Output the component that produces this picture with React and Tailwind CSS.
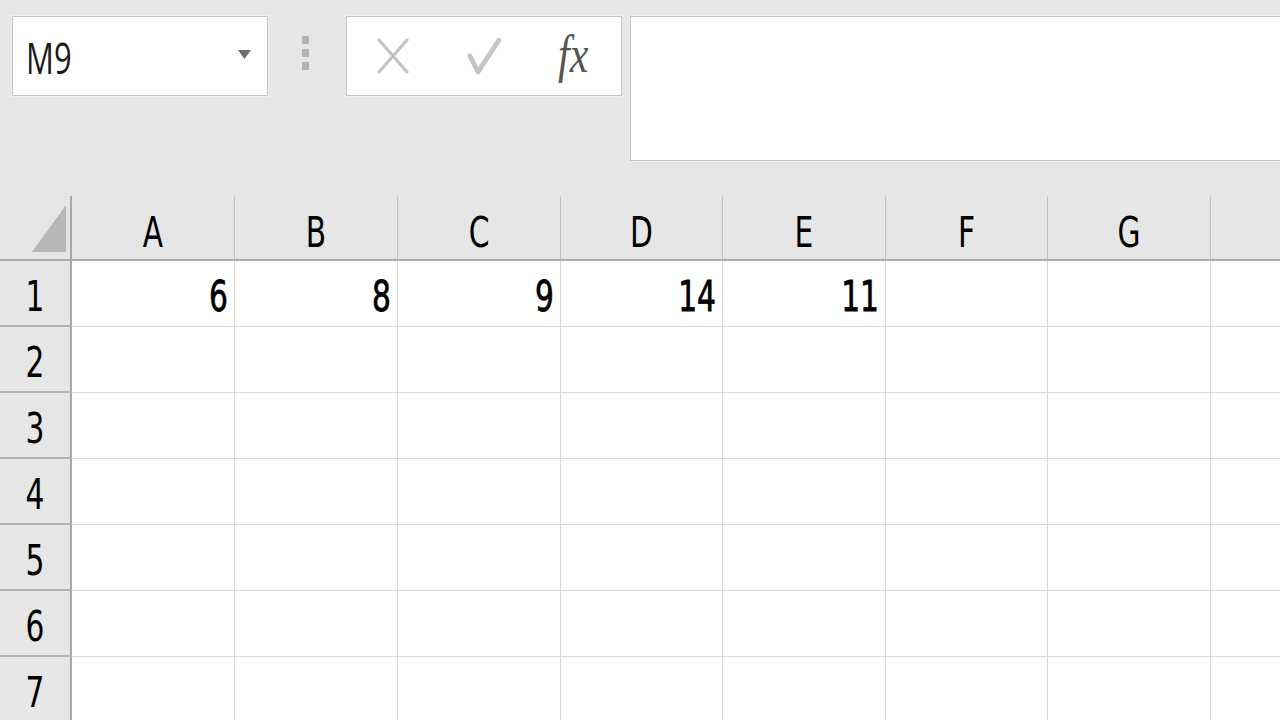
import React from "react";

const cols = [
  { l: "A", w: "w-[163px]" },
  { l: "B", w: "w-[163px]" },
  { l: "C", w: "w-[163px]" },
  { l: "D", w: "w-[162px]" },
  { l: "E", w: "w-[163px]" },
  { l: "F", w: "w-[162px]" },
  { l: "G", w: "w-[163px]" },
];

const row1 = ["6", "8", "9", "14", "11", "", ""];

const cellFont = { fontFamily: '"DejaVu Sans Condensed", "DejaVu Sans", sans-serif' };

function Glyph({ children, className = "" }) {
  return (
    <span className={"inline-block origin-center scale-y-[1.3] text-[33px] leading-none " + className} style={cellFont}>
      {children}
    </span>
  );
}

export default function App() {
  return (
    <div className="w-[1280px] h-[720px] bg-[#e6e6e6] overflow-hidden flex flex-col">
      {/* toolbar */}
      <div className="h-[196px] shrink-0 flex items-start pt-4 pl-3">
        <div className="relative w-[256px] h-[80px] bg-white border border-[#c3c3c3] shadow-[0_0_0_1px_#f0f0f0] flex items-center pl-[13px] pt-[2px]">
          <span
            className="inline-block origin-center scale-y-[1.42] text-[31px] text-[#1a1a1a] leading-none"
            style={{ fontFamily: '"Open Sans", "Liberation Sans", sans-serif' }}
          >
            M9
          </span>
          <svg className="absolute right-[16px] top-[33px]" width="13" height="9" viewBox="0 0 13 9">
            <polygon points="0,0 13,0 6.5,9" fill="#6e6e6e" />
          </svg>
        </div>
        <div className="ml-[34px] mt-[20px] flex flex-col gap-[5px]">
          <div className="w-[7px] h-[8px] bg-[#b3b3b3]" />
          <div className="w-[7px] h-[8px] bg-[#b3b3b3]" />
          <div className="w-[7px] h-[8px] bg-[#b3b3b3]" />
        </div>
        <div className="relative ml-[37px] w-[276px] h-[80px] bg-white border border-[#c3c3c3] shadow-[0_0_0_1px_#f0f0f0]">
          <svg className="absolute left-[30px] top-[21px]" width="32" height="36" viewBox="0 0 32 36">
            <path d="M2 2 L30 34 M2 34 L30 2" stroke="#c4c4c4" strokeWidth="3.2" strokeLinecap="round" fill="none" />
          </svg>
          <svg className="absolute left-[120px] top-[21px]" width="34" height="38" viewBox="0 0 34 38">
            <path d="M3 18 L11 34 L32 2" stroke="#c4c4c4" strokeWidth="4.8" strokeLinecap="round" strokeLinejoin="round" fill="none" />
          </svg>
          <span
            className="absolute left-[211px] top-[16px] inline-block origin-center scale-y-[1.25] italic text-[42px] leading-none text-[#555]"
            style={{ fontFamily: '"Liberation Serif", "DejaVu Serif", serif' }}
          >
            fx
          </span>
        </div>
        <div className="ml-[8px] flex-1 h-[145px] bg-white border border-r-0 border-[#c3c3c3] shadow-[0_0_0_1px_#f0f0f0]" />
      </div>

      {/* column headers */}
      <div className="h-[65px] shrink-0 flex border-b-2 border-[#acacac]">
        <div className="w-[72px] shrink-0 border-r-2 border-[#a8a8a8] relative">
          <svg className="absolute left-0 top-0" width="70" height="63" viewBox="0 0 70 63">
            <polygon points="66,9 66,56 32,56" fill="#b7b7b7" />
          </svg>
        </div>
        {cols.map((c) => (
          <div key={c.l} className={c.w + " shrink-0 border-r border-[#c2c2c2] flex items-center justify-center pt-[9px] text-black"}>
            <Glyph>{c.l}</Glyph>
          </div>
        ))}
        <div className="flex-1" />
      </div>

      {/* rows */}
      {[1, 2, 3, 4, 5, 6, 7].map((r) => (
        <div key={r} className="h-[66px] shrink-0 flex">
          <div className="w-[72px] shrink-0 border-r-2 border-b-2 border-r-[#a8a8a8] border-b-[#b2b2b2] flex items-center justify-center pt-[6px] text-black">
            <Glyph>{r}</Glyph>
          </div>
          {cols.map((c, i) => (
            <div key={c.l} className={c.w + " shrink-0 bg-white border-r border-b border-[#dcd8d8] flex items-center justify-end pr-[6px] pt-[6px] text-black"}>
              {r === 1 && row1[i] ? <Glyph className="[-webkit-text-stroke:0.6px_black]">{row1[i]}</Glyph> : null}
            </div>
          ))}
          <div className="flex-1 bg-white border-b border-[#dcd8d8]" />
        </div>
      ))}
    </div>
  );
}
